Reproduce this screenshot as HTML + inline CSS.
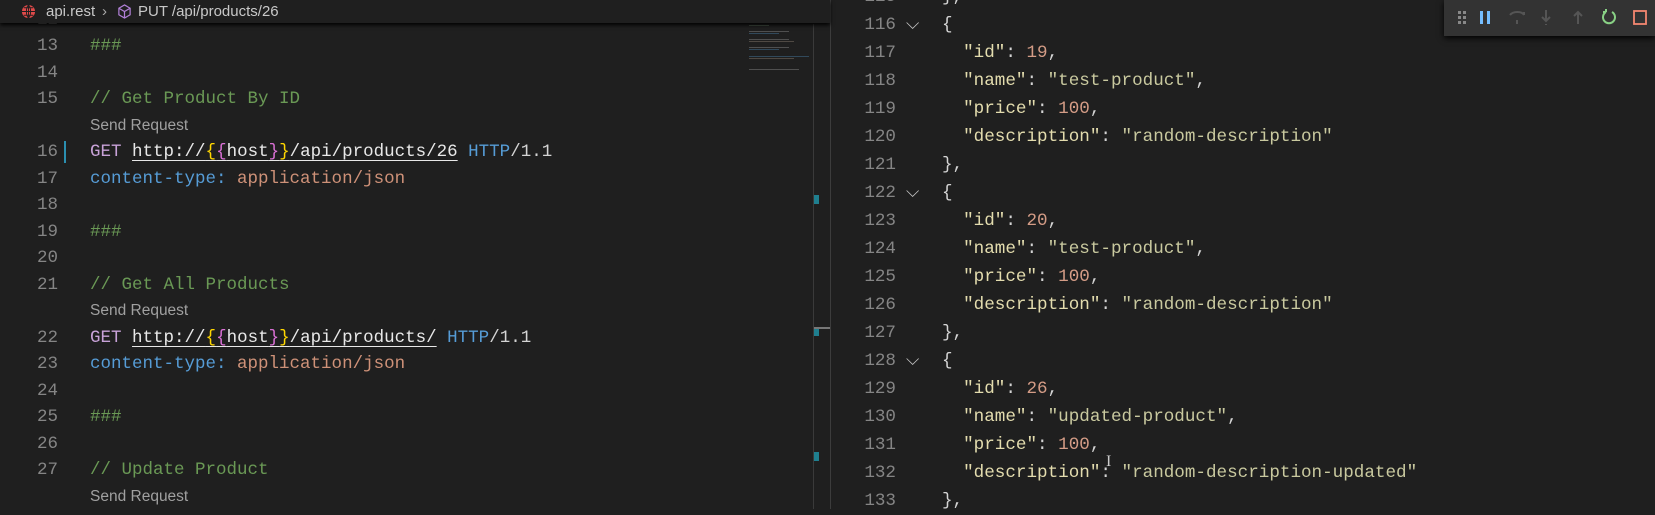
<!DOCTYPE html>
<html><head><meta charset="utf-8"><style>
*{margin:0;padding:0;box-sizing:border-box}
body{width:1655px;height:509px;background:#1f1f1f;overflow:hidden;position:relative;font-family:"Liberation Mono",monospace;color:#d4d4d4}
.l{position:absolute;left:0;width:830px;height:26.5px;line-height:26.5px;font-size:17.5px;white-space:pre}
.l .n{position:absolute;right:772px;color:#858585;width:60px;text-align:right}
.l .c{position:absolute;left:90px}
.sr{font-family:"Liberation Sans",sans-serif;font-size:15.5px;color:#a0a0a0}
.cm{color:#6a9955}.get{color:#c8a2d8}.u{color:#e8e8e8;text-decoration:underline;text-underline-offset:4px}
.y{color:#ffd700}.p{color:#da70d6}.b{color:#569cd6}.o{color:#ce9178}
.r{position:absolute;left:830px;width:825px;height:28px;line-height:28px;font-size:17.6px;white-space:pre}
.r .n{position:absolute;left:0;width:66px;text-align:right;color:#858585}
.r .f{position:absolute;left:76px;top:0;color:#c5c5c5}
.r .c{position:absolute;left:112px}
.k{color:#e3dcae}.num{color:#d49c86}.s{color:#c9c99f}
</style></head><body>
<div style="position:absolute;left:0;top:0;width:830px;height:23px;background:#1f1f1f;z-index:2;font-family:'Liberation Sans',sans-serif;font-size:15px;line-height:23px;color:#c8c8c8;box-shadow:0 2px 4px #000">
<svg style="position:absolute;left:21px;top:4px" width="15" height="15" viewBox="0 0 16 16"><circle cx="8" cy="8" r="7" fill="#e04a4a"/><path d="M1 8h14M8 1v14M3 4h10M3 12h10M8 1c-3 3-3 11 0 14M8 1c3 3 3 11 0 14" stroke="#1f1f1f" stroke-width="1" fill="none"/></svg>
<span style="position:absolute;left:46px">api.rest</span><span style="position:absolute;left:102px;color:#aaa">›</span>
<svg style="position:absolute;left:117px;top:4px" width="15" height="15" viewBox="0 0 16 16"><path d="M8 1l6 3.5v7L8 15l-6-3.5v-7z M2 4.5L8 8l6-3.5M8 8v7" stroke="#b180d7" stroke-width="1.3" fill="none"/></svg>
<span style="position:absolute;left:138px">PUT /api/products/26</span></div>

<div class="l" style="top:6.5px"><span class="n">12</span></div>
<div class="l" style="top:33px"><span class="n">13</span><span class="c cm">###</span></div>
<div class="l" style="top:59.5px"><span class="n">14</span></div>
<div class="l" style="top:86px"><span class="n">15</span><span class="c cm">// Get Product By ID</span></div>
<div class="l" style="top:112.5px"><span class="c sr">Send Request</span></div>
<div class="l" style="top:139px"><span class="n">16</span><span style="position:absolute;left:64px;top:2px;width:2px;height:22px;background:#2b8fb0"></span><span class="c"><span class="get">GET</span> <span class="u">http://<span class="y">{</span><span class="p">{</span>host<span class="p">}</span><span class="y">}</span>/api/products/26</span> <span class="b">HTTP</span>/1.1</span></div>
<div class="l" style="top:165.5px"><span class="n">17</span><span class="c"><span class="b">content-type:</span> <span class="o">application/json</span></span></div>
<div class="l" style="top:192px"><span class="n">18</span></div>
<div class="l" style="top:218.5px"><span class="n">19</span><span class="c cm">###</span></div>
<div class="l" style="top:245px"><span class="n">20</span></div>
<div class="l" style="top:271.5px"><span class="n">21</span><span class="c cm">// Get All Products</span></div>
<div class="l" style="top:298px"><span class="c sr">Send Request</span></div>
<div class="l" style="top:324.5px"><span class="n">22</span><span class="c"><span class="get">GET</span> <span class="u">http://<span class="y">{</span><span class="p">{</span>host<span class="p">}</span><span class="y">}</span>/api/products/</span> <span class="b">HTTP</span>/1.1</span></div>
<div class="l" style="top:351px"><span class="n">23</span><span class="c"><span class="b">content-type:</span> <span class="o">application/json</span></span></div>
<div class="l" style="top:377.5px"><span class="n">24</span></div>
<div class="l" style="top:404px"><span class="n">25</span><span class="c cm">###</span></div>
<div class="l" style="top:430.5px"><span class="n">26</span></div>
<div class="l" style="top:457px"><span class="n">27</span><span class="c cm">// Update Product</span></div>
<div class="l" style="top:483.5px"><span class="c sr">Send Request</span></div>

<!-- minimap -->
<div style="position:absolute;left:749px;top:24px;width:64px;height:90px;opacity:.35">
<div style="height:1px;width:20px;background:#8a8;margin:1px 0"></div>
<div style="height:1px;width:40px;background:#aaa;margin:5px 0 1px"></div><div style="height:1px;width:30px;background:#59c;margin:1px 0"></div>
<div style="height:1px;width:40px;background:#aaa;margin:5px 0 1px"></div><div style="height:1px;width:45px;background:#a98;margin:1px 0"></div>
<div style="height:1px;width:40px;background:#aaa;margin:5px 0 1px"></div><div style="height:1px;width:30px;background:#59c;margin:1px 0"></div>
<div style="height:1px;width:60px;background:#59c;margin:6px 0 1px"></div><div style="height:1px;width:45px;background:#a98;margin:1px 0"></div>
<div style="height:1px;width:50px;background:#aaa;margin:10px 0 1px"></div>
</div>
<div style="position:absolute;left:813px;top:24px;width:1px;height:485px;background:#3a3a3a"></div>
<div style="position:absolute;left:814px;top:195px;width:5px;height:9px;background:#1f7f8f"></div>
<div style="position:absolute;left:814px;top:327px;width:5px;height:9px;background:#1f7f8f"></div>
<div style="position:absolute;left:814px;top:452px;width:5px;height:9px;background:#1f7f8f"></div>
<div style="position:absolute;left:814px;top:327px;width:16px;height:2px;background:#777"></div>
<div style="position:absolute;left:830px;top:0;width:1px;height:509px;background:#3c3c3c"></div>

<div class="r" style="top:-17.5px"><span class="n">115</span><span class="c" style="left:112px">},</span></div>
<div class="r" style="top:10.5px"><span class="n">116</span><span class="f">⌵</span><span class="c">{</span></div>
<div class="r" style="top:38.5px"><span class="n">117</span><span class="c">  <span class="k">"id"</span>: <span class="num">19</span>,</span></div>
<div class="r" style="top:66.5px"><span class="n">118</span><span class="c">  <span class="k">"name"</span>: <span class="s">"test-product"</span>,</span></div>
<div class="r" style="top:94.5px"><span class="n">119</span><span class="c">  <span class="k">"price"</span>: <span class="num">100</span>,</span></div>
<div class="r" style="top:122.5px"><span class="n">120</span><span class="c">  <span class="k">"description"</span>: <span class="s">"random-description"</span></span></div>
<div class="r" style="top:150.5px"><span class="n">121</span><span class="c">},</span></div>
<div class="r" style="top:178.5px"><span class="n">122</span><span class="f">⌵</span><span class="c">{</span></div>
<div class="r" style="top:206.5px"><span class="n">123</span><span class="c">  <span class="k">"id"</span>: <span class="num">20</span>,</span></div>
<div class="r" style="top:234.5px"><span class="n">124</span><span class="c">  <span class="k">"name"</span>: <span class="s">"test-product"</span>,</span></div>
<div class="r" style="top:262.5px"><span class="n">125</span><span class="c">  <span class="k">"price"</span>: <span class="num">100</span>,</span></div>
<div class="r" style="top:290.5px"><span class="n">126</span><span class="c">  <span class="k">"description"</span>: <span class="s">"random-description"</span></span></div>
<div class="r" style="top:318.5px"><span class="n">127</span><span class="c">},</span></div>
<div class="r" style="top:346.5px"><span class="n">128</span><span class="f">⌵</span><span class="c">{</span></div>
<div class="r" style="top:374.5px"><span class="n">129</span><span class="c">  <span class="k">"id"</span>: <span class="num">26</span>,</span></div>
<div class="r" style="top:402.5px"><span class="n">130</span><span class="c">  <span class="k">"name"</span>: <span class="s">"updated-product"</span>,</span></div>
<div class="r" style="top:430.5px"><span class="n">131</span><span class="c">  <span class="k">"price"</span>: <span class="num">100</span>,</span></div>
<div class="r" style="top:458.5px"><span class="n">132</span><span class="c">  <span class="k">"description"</span>: <span class="s">"random-description-updated"</span></span></div>
<div class="r" style="top:486.5px"><span class="n">133</span><span class="c">},</span></div>
<div style="position:absolute;left:1106px;top:453px;color:#ccc;font-size:16px;font-family:'Liberation Serif',serif">I</div>

<div style="position:absolute;left:1444px;top:0;width:211px;height:36px;background:#333;box-shadow:0 2px 6px #000">
<svg width="211" height="36" viewBox="0 0 211 36">
<g fill="#888"><rect x="14" y="11" width="3" height="3"/><rect x="19" y="11" width="3" height="3"/><rect x="14" y="16" width="3" height="3"/><rect x="19" y="16" width="3" height="3"/><rect x="14" y="21" width="3" height="3"/><rect x="19" y="21" width="3" height="3"/></g>
<rect x="36" y="11" width="3" height="13" fill="#75beff"/><rect x="43" y="11" width="3" height="13" fill="#75beff"/>
<path d="M66 15c3-4 12-4 14 0M80 15v-3M73 20v4" stroke="#555" stroke-width="2" fill="none"/>
<path d="M102 10v11M98 17l4 4 4-4M102 24v1" stroke="#555" stroke-width="2" fill="none"/>
<path d="M134 24v-11M130 16l4-4 4 4" stroke="#555" stroke-width="2" fill="none"/>
<path d="M162 12a6 6 0 1 0 6 0M162 12v-3M162 12h-3" stroke="#89d185" stroke-width="2" fill="none"/>
<rect x="190" y="11" width="12" height="13" stroke="#f48771" stroke-width="1.8" fill="none"/>
</svg></div>
</body></html>
